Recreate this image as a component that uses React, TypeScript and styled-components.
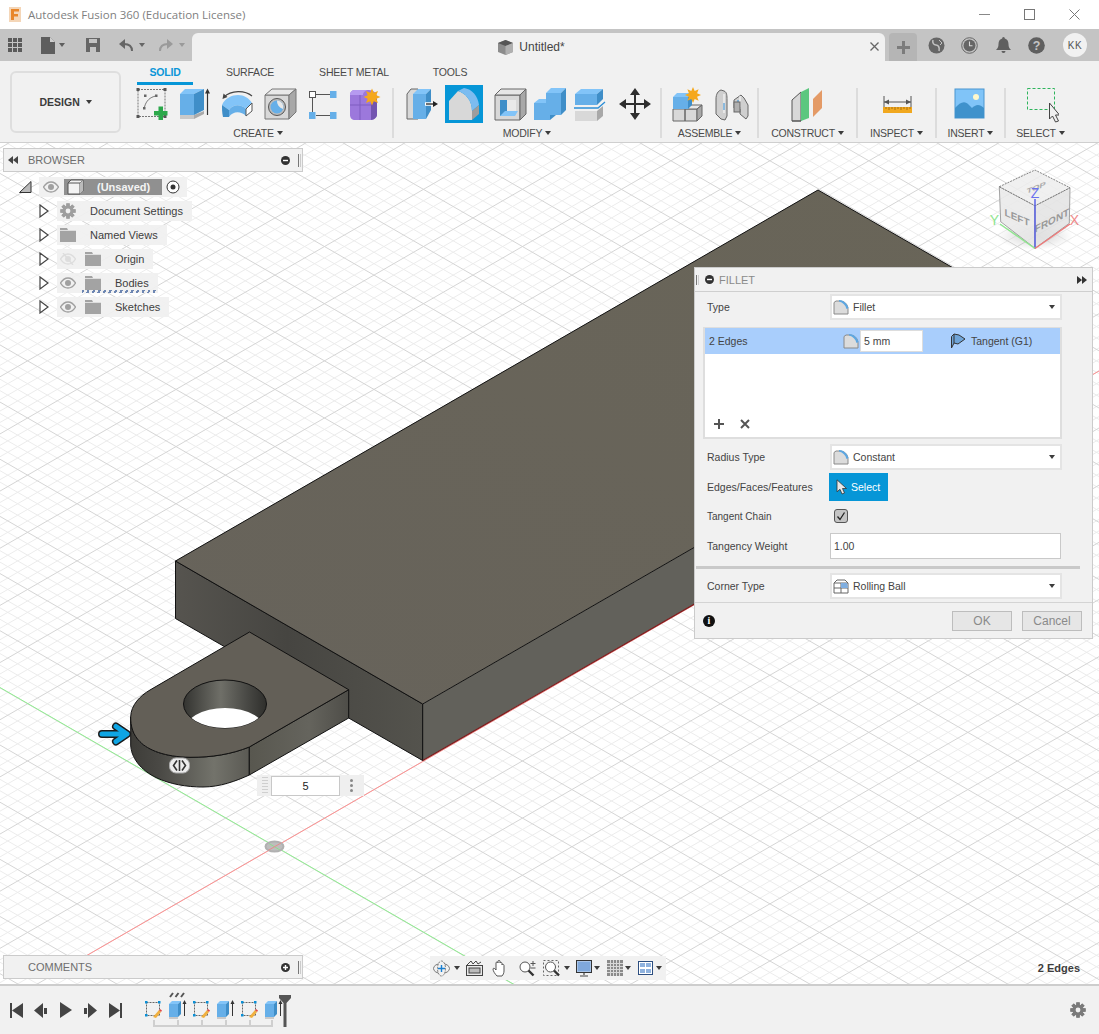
import React from "react";
import styled, { createGlobalStyle } from "styled-components";

const Global = createGlobalStyle`
  html, body { margin: 0; padding: 0; background: #fff; }
  * { box-sizing: border-box; }
`;

const Page = styled.div`
  width: 1099px; height: 1034px; overflow: hidden; display: flex; flex-direction: column;
  font-family: "Liberation Sans", Arial, sans-serif; font-size: 11px; color: #4a4a4a; background: #fff;
`;

/* ---------- title bar ---------- */
const TitleBar = styled.div`height: 29px; display: flex; align-items: center; padding-left: 9px; background: #fff; flex: none;`;
const TitleText = styled.span`margin-left: 7px; font-family: "Open Sans", sans-serif; font-size: 11.5px; color: #7f7f7f; white-space: nowrap;`;
const WindowControls = styled.div`margin-left: auto; margin-right: 2px; display: flex;`;
const WindowButton = styled.div`width: 45px; height: 29px; display: flex; align-items: center; justify-content: center;`;

/* ---------- document strip ---------- */
const TabStrip = styled.div`height: 32px; background: #c4c4c4; display: flex; flex: none;`;
const QuickTools = styled.div`width: 192px; display: flex; align-items: center; flex: none;`;
const QuickButton = styled.div<{ $ml: number }>`margin-left: ${(p) => p.$ml}px; display: flex; align-items: center;`;
const DocTab = styled.div`
  width: 693px; height: 28px; margin-top: 4px; padding-right: 14px; background: #f1f1f1; border-radius: 6px 6px 0 0;
  display: flex; align-items: center; justify-content: center; position: relative; font-size: 12px; color: #444;
`;
const DocTitle = styled.span`margin-left: 6px; margin-top: -1px;`;
const DocClose = styled.span`position: absolute; right: 6px; top: 9px; display: flex;`;
const PlusTab = styled.div`
  width: 28px; height: 28px; margin: 4px 0 0 4px; background: #b5b5b5; border-radius: 4px 4px 0 0;
  display: flex; align-items: center; justify-content: center;
`;
const StripIcon = styled.div<{ $ml: number }>`margin-left: ${(p) => p.$ml}px; display: flex; align-items: center; height: 32px;`;
const Avatar = styled.div`
  width: 24px; height: 24px; border-radius: 50%; background: #f1f1f1; margin: 4px 0 0 18px; color: #555;
  font-size: 10px; letter-spacing: 0.6px; display: flex; align-items: center; justify-content: center;
`;

/* ---------- toolbar ---------- */
const Toolbar = styled.div`height: 82px; background: #f1f1f1; border-bottom: 1px solid #cfcfcf; display: flex; flex: none;`;
const DesignButton = styled.div`
  width: 111px; height: 62px; margin: 10px 0 0 10px; border: 2px solid #dedede; border-radius: 6px;
  display: flex; align-items: center; justify-content: center; font-weight: bold; font-size: 10.5px; color: #3c3c3c; flex: none;
`;
const ToolColumn = styled.div`margin-left: 9px; display: flex; flex-direction: column;`;
const TabRow = styled.div`height: 24px; display: flex; gap: 19px; padding-left: 7px;`;
const RibbonTab = styled.div<{ $w: number; $active?: boolean }>`
  width: ${(p) => p.$w}px; height: 24px; padding-top: 4px; line-height: 14px; text-align: center; white-space: nowrap;
  color: ${(p) => (p.$active ? "#0b96d8" : "#4a4a4a")}; font-weight: ${(p) => (p.$active ? "bold" : "normal")}; font-size: 10.5px; letter-spacing: -0.2px;
  border-bottom: 3px solid ${(p) => (p.$active ? "#0696d7" : "transparent")};
`;
const GroupRow = styled.div`display: flex;`;
const Group = styled.div<{ $w: number }>`width: ${(p) => p.$w}px; display: flex; flex-direction: column; flex: none;`;
const SlotRow = styled.div`display: flex; height: 38px;`;
const Slot = styled.div<{ $ml: number; $selected?: boolean }>`
  width: 38px; height: 38px; margin-left: ${(p) => p.$ml}px; flex: none; background: ${(p) => (p.$selected ? "#0696d7" : "transparent")};
`;
const GroupLabel = styled.div<{ $shift?: number }>`
  margin-top: 3px; height: 14px; line-height: 14px; display: flex; justify-content: center; align-items: center; gap: 3px;
  font-size: 10.5px; letter-spacing: -0.25px; color: #4a4a4a; padding-right: ${(p) => p.$shift ?? 0}px;
`;
const Caret = styled.i<{ $size?: number; $color?: string }>`
  display: inline-block; width: 0; height: 0; flex: none;
  border-left: ${(p) => p.$size ?? 3}px solid transparent; border-right: ${(p) => p.$size ?? 3}px solid transparent;
  border-top: ${(p) => (p.$size ?? 3) + 1}px solid ${(p) => p.$color ?? "#3c3c3c"};
`;
const Separator = styled.div`width: 2px; height: 50px; margin-top: 3px; background: #dcdcdc; flex: none;`;
const IconSvg = styled.svg`display: block;`;

/* ---------- canvas ---------- */
const Canvas = styled.div`flex: 1; position: relative; overflow: hidden; background: #fff;`;
const Scene = styled.svg`position: absolute; left: 0; top: 0; display: block;`;

const Bar = styled.div`
  height: 24px; background: #f1f1f1; border: 1px solid #cbcbcb; display: flex; align-items: center; color: #6e6e6e; font-size: 11px;
`;
const BrowserPanel = styled.div`position: absolute; left: 3px; top: 5px; width: 300px;`;
const CommentsPanel = styled(Bar)`position: absolute; left: 3px; top: 812px; width: 300px; padding-left: 24px;`;
const BarTitle = styled.span``;
const BarEnd = styled.span`margin-left: auto; display: flex; align-items: center; gap: 8px; padding-right: 1px;`;
const Dot = styled.span`
  width: 9px; height: 9px; border-radius: 50%; background: #333; color: #fff; display: flex; align-items: center; justify-content: center; flex: none;
`;
const Grip = styled.span`width: 3px; height: 13px; border-left: 1px solid #777; border-right: 1px solid #ccc;`;

const TreeRow = styled.div<{ $indent: number; $first?: boolean }>`
  height: 24px; display: flex; align-items: center; padding-left: ${(p) => p.$indent}px; margin-top: ${(p) => (p.$first ? 3 : 0)}px;
`;
const Toggle = styled.span<{ $gap: number }>`margin-right: ${(p) => p.$gap}px; display: flex; flex: none;`;
const Chip = styled.div`
  height: 20px; background: rgba(240, 240, 240, 0.92); display: flex; align-items: center; padding: 0 9px 0 3px; position: relative;
  font-size: 11px; color: #3e3e3e; white-space: nowrap;
`;
const RootChip = styled(Chip)`padding: 0 7px 0 4px;`;
const RootLabel = styled.div`
  width: 98px; height: 16px; margin-left: 5px; background: #909090; display: flex; align-items: center; padding-left: 3px;
  color: #f4f4f4; font-weight: bold; font-size: 11px; margin-right: 4px;
`;
const RootText = styled.span`margin-left: 13px;`;
const ChipIcon = styled.span<{ $ml?: number }>`display: flex; flex: none; margin-left: ${(p) => p.$ml ?? 0}px;`;
const ChipText = styled.span`margin-left: 14px;`;
const Squiggle = styled.span`
  position: absolute; left: 25px; right: 2px; bottom: 0; height: 3px;
  background: repeating-linear-gradient(115deg, #6d86b2 0 2px, transparent 2px 5px);
`;

/* ---------- fillet dialog ---------- */
const Dialog = styled.div`
  position: absolute; left: 694px; top: 124px; width: 399px; height: 372px; background: #f1f1f1; border: 1px solid #cbcbcb; display: flex; flex-direction: column;
`;
const DialogHeader = styled.div`height: 24px; border-bottom: 1px solid #cfcfcf; display: flex; align-items: center; padding-left: 1px; color: #8a8a8a; flex: none;`;
const DialogTitle = styled.span`margin-left: 5px; font-size: 11px;`;
const HeaderGrip = styled(Grip)`margin-right: 6px; height: 10px;`;
const DialogFast = styled.span`margin-left: auto; margin-right: 5px; display: flex;`;
const FormRow = styled.div<{ $mt: number }>`height: 28px; margin-top: ${(p) => p.$mt}px; display: flex; align-items: center; padding-left: 12px; flex: none;`;
const FormLabel = styled.span<{ $small?: boolean }>`width: 123px; flex: none; font-size: ${(p) => (p.$small ? 10 : 10.5)}px; color: #444; white-space: nowrap;`;
const Select = styled.div`
  width: 232px; height: 26px; background: #fff; border: 2px solid #e4e4e4; display: flex; align-items: center; padding: 0 5px 0 1px; font-size: 10.5px; color: #444;
`;
const SelectText = styled.span`margin-left: 4px;`;
const SelectCaret = styled.span`margin-left: auto; display: flex;`;
const EdgeTable = styled.div`width: 359px; height: 112px; margin: 6px 0 0 8px; border: solid #dedede; border-width: 1px 2px 2px; background: #fff; display: flex; flex-direction: column; flex: none;`;
const EdgeRow = styled.div`height: 26px; background: #a9cefc; display: flex; align-items: center; color: #444; font-size: 10.5px; padding-left: 4px; flex: none;`;
const EdgeName = styled.span`width: 134px;`;
const EdgeInput = styled.div`width: 63px; height: 22px; margin-left: 1px; background: #fff; border: 1px solid #ddd; display: flex; align-items: center; padding-left: 3px;`;
const EdgeTangent = styled.span`margin-left: 27px; display: flex;`;
const EdgeTangentText = styled.span`margin-left: 5px;`;
const EdgeActions = styled.div`margin-top: auto; height: 28px; padding: 2px 0 0 8px; display: flex; gap: 14px; align-items: center;`;
const SelectButton = styled.div`
  width: 59px; height: 28px; margin-left: -1px; background: #0696d7; color: #fff; display: flex; align-items: center; padding-left: 7px; gap: 4px; font-size: 10.5px;
`;
const Check = styled.div`
  width: 14px; height: 14px; margin-left: 4px; background: #c4c4c4; border: 1px solid #555; border-radius: 3px; display: flex; align-items: center; justify-content: center;
`;
const TextField = styled.div`width: 231px; height: 26px; background: #fff; border: 1px solid #c9c9c9; display: flex; align-items: center; padding-left: 3px; font-size: 10.5px; color: #444;`;
const DialogRule = styled.div`height: 3px; width: 384px; margin: 6px 0 0 1px; background: #c9c9c9; flex: none;`;
const DialogFooter = styled.div`margin-top: 2px; flex: 1; border-top: 1px solid #d4d4d4; display: flex; align-items: center; padding: 0 10px 0 8px; gap: 10px;`;
const FooterDot = styled(Dot)`width: 12px; height: 12px; margin-right: auto; background: #111; font-family: "Liberation Serif", serif; font-weight: bold; font-size: 10px;`;
const FooterButton = styled.div`
  width: 60px; height: 20px; background: #e6e6e6; border: 1px solid #bdbdbd; color: #8a8a8a; font-size: 12px; display: flex; align-items: center; justify-content: center;
`;

/* ---------- on-canvas input ---------- */
const ValueBox = styled.div`
  position: absolute; left: 257px; top: 632px; width: 107px; height: 21px; background: #efefef; display: flex; align-items: center;
`;
const ValueGrip = styled.span`width: 6px; height: 17px; margin: 0 3px 0 5px; background: repeating-linear-gradient(180deg, #cfcfcf 0 1px, transparent 1px 3px);`;
const ValueField = styled.div`width: 69px; height: 20px; background: #fff; border: 1px solid #c8c8c8; display: flex; align-items: center; justify-content: center; color: #222; font-size: 11px;`;
const ValueDots = styled.span`margin-left: 10px; display: flex; flex-direction: column; gap: 2px;`;
const ValueDot = styled.i`width: 3px; height: 3px; border-radius: 50%; background: #888;`;

/* ---------- nav bar ---------- */
const NavBar = styled.div`position: absolute; left: 430px; top: 813px; width: 236px; height: 24px; background: #f1f1f1; display: flex; align-items: center;`;
const NavItem = styled.span<{ $ml: number }>`margin-left: ${(p) => p.$ml}px; display: flex; align-items: center; flex: none;`;
const SelectionCount = styled.span`position: absolute; right: 19px; top: 819px; font-weight: bold; font-size: 11px; color: #3d3d3d;`;

/* ---------- timeline ---------- */
const Timeline = styled.div`height: 50px; flex: none; background: #f1f1f1; border-top: 2px solid #cdcdcd; display: flex; align-items: center; padding-left: 10px;`;
const PlayButton = styled.span<{ $ml: number }>`margin-left: ${(p) => p.$ml}px; display: flex;`;
const Track = styled.div`margin-left: 19px; display: flex;`;
const Gear = styled.span`margin-left: auto; margin-right: 13px; display: flex;`;

/* ---------- drawings ---------- */
const B = { l: "#82c4f8", m: "#66afe8", d: "#3f8ec8", g: "#d8d8d8", gd: "#a8a8a8", o: "#666" };

const Sun: React.FC<{ cx: number; cy: number; r: number }> = ({ cx, cy, r }) => {
  const pts: string[] = [];
  for (let i = 0; i < 16; i++) {
    const a = (i * Math.PI) / 8;
    const R = i % 2 ? r * 0.55 : r;
    pts.push(`${cx + R * Math.sin(a)},${cy - R * Math.cos(a)}`);
  }
  return <polygon points={pts.join(" ")} fill="#f5a81c" />;
};

const Ico: React.FC<{ children: React.ReactNode }> = ({ children }) => (
  <IconSvg width="38" height="38" viewBox="0 0 38 38">{children}</IconSvg>
);

const SketchIcon = () => (
  <Ico>
    <rect x="6" y="4.5" width="27" height="27" fill="none" stroke="#777" strokeDasharray="2 1" />
    {[[4.5, 3], [31.5, 3], [4.5, 30], [31.5, 30]].map(([x, y]) => <rect key={`${x}${y}`} x={x} y={y} width="3" height="3" fill="#555" />)}
    <rect x="12" y="9.5" width="2.5" height="2.5" fill="#666" /><rect x="23" y="9.5" width="2.5" height="2.5" fill="#666" />
    <rect x="11" y="22" width="2.5" height="2.5" fill="#666" />
    <path d="M12.5 22 C14 16 18 12 24 11" fill="none" stroke="#777" />
    <path d="M26.5 21.5h4.500v4.500h4.500v4.500h-4.500v4.500h-4.500v-4.500h-4.500v-4.500h4.500z" fill="#2ba84a" />
  </Ico>
);
const ExtrudeIcon = () => (
  <Ico>
    <path d="M1 30h14v4H1z" fill="#c9c9c9" /><path d="M15 34l10-5v-3l-10 4z" fill="#aaa" />
    <path d="M1 9h14v21H1z" fill={B.m} /><path d="M1 9l5-5h19l-10 5z" fill={B.l} /><path d="M15 9l10-5v21l-10 5z" fill={B.d} />
    <path d="M28.5 30V6" stroke="#333" strokeWidth="1.2" /><path d="M28.5 3.5l-2.5 5h5z" fill="#333" />
  </Ico>
);
const RevolveIcon = () => (
  <Ico>
    <path d="M5 12C12 5 26 5 33 11" fill="none" stroke="#444" strokeWidth="1.1" /><path d="M3.500 14l1-5.500 4 3.500z" fill="#444" />
    <path d="M3 20C6 13 13 10 19 10C25 10 30 13 33 18L27 24C22 19 14 19 10 25Z" fill={B.l} />
    <path d="M3 20L10 25V32H4C3 28 3 24 3 20Z" fill={B.d} />
    <path d="M10 25C14 19 22 19 27 24V31C22 26 14 26 10 32Z" fill={B.m} />
    <path d="M27 24L33 18V26L27 31Z" fill="#fff" stroke="#555" />
  </Ico>
);
const HoleIcon = () => (
  <Ico>
    <path d="M4 10h24v24H4z" fill={B.g} stroke="#777" /><path d="M4 10l7-6h24l-7 6z" fill="#e8e8e8" stroke="#777" />
    <path d="M28 10l7-6v23l-7 7z" fill={B.gd} stroke="#777" />
    <circle cx="16" cy="22" r="8.5" fill="#bbb" stroke="#555" /><circle cx="16" cy="22" r="6.5" fill={B.m} />
    <path d="M16 15.5a6.5 6.5 0 0 1 6 8.5 8 8 0 0 1-6-8.5z" fill="#e8e8e8" />
  </Ico>
);
const PatternIcon = () => (
  <Ico>
    <rect x="6.5" y="6.5" width="6" height="6" fill="#fff" stroke="#555" />
    <rect x="27" y="6" width="6.5" height="7" fill={B.m} /><rect x="6" y="27" width="6.5" height="7" fill={B.m} /><rect x="27" y="27" width="6.5" height="7" fill={B.m} />
    <path d="M13 9.500h14M13 30.500h14M9.500 13v14" stroke="#555" />
  </Ico>
);
const FormIcon = () => (
  <Ico>
    <path d="M2 10c0-3 2-5 5-5h14c4 0 8 3 8 7v17c0 3-3 6-6 6H7c-3 0-5-2-5-5z" fill="#9c78dc" />
    <path d="M2 10c0-3 2-5 5-5h14c-3 0-6 2-6 5z" fill="#b69af0" />
    <path d="M23 14h6v16c0 2-3 5-6 5z" fill="#7355b0" />
    <path d="M2 20h21M12 10v25" stroke="#7e5cc0" />
    <Sun cx={24} cy={12} r={8.5} />
  </Ico>
);
const PressPullIcon = () => (
  <Ico>
    <path d="M1 9l4-5h7v30H1z" fill={B.g} stroke="#666" />
    <path d="M7 9l5-5h13l-5 5z" fill={B.l} /><path d="M7 9h13v25H7z" fill={B.m} /><path d="M20 9l5-5v21l-5 9z" fill={B.d} />
    <path d="M19 19h9" stroke="#fff" strokeWidth="3.5" /><path d="M20 19h8" stroke="#222" strokeWidth="1.3" /><path d="M32 19l-5-3v6z" fill="#222" />
  </Ico>
);
const FilletIcon = () => (
  <Ico>
    <path d="M4 16L13 6C20 8 27 15 27 26V35H4Z" fill={B.g} />
    <path d="M13 6L19 3C27 4 33 11 34 20L27 26C27 15 20 8 13 6Z" fill="#7cbcf0" />
    <path d="M27 26L34 20V29L27 35Z" fill="#9d9d9d" />
  </Ico>
);
const ShellIcon = () => (
  <Ico>
    <path d="M2 10h25v25H2z" fill={B.g} stroke="#666" /><path d="M2 10l6-6h25l-6 6z" fill="#e6e6e6" stroke="#666" />
    <path d="M27 10l6-6v25l-6 6z" fill={B.gd} stroke="#666" />
    <path d="M7 15h7v11h8v5H7z" fill={B.d} /><path d="M14 15h9v11h-9z" fill="#e9e9e9" /><path d="M12 26h13l-3 5H7z" fill={B.l} />
  </Ico>
);
const CombineIcon = () => (
  <Ico>
    <path d="M3 18h16v17H3z" fill={B.m} /><path d="M3 18l5-4h10v4z" fill={B.l} />
    <path d="M15 8h15v22H15z" fill={B.m} /><path d="M15 8l5-5h15l-5 5z" fill={B.l} /><path d="M30 8l5-5v22l-5 5z" fill={B.d} />
    <path d="M19 30h6l-6 5z" fill={B.d} />
  </Ico>
);
const OffsetIcon = () => (
  <Ico>
    <path d="M2 9l6-5h22l-6 5z" fill={B.l} /><path d="M2 9h22v11H2z" fill={B.m} /><path d="M24 9l6-5v10l-6 6z" fill={B.d} />
    <path d="M1 23h24l7-6" fill="none" stroke="#2c8ed6" strokeWidth="1.3" />
    <path d="M2 26h22v10H2z" fill={B.g} /><path d="M24 26l6-5v10l-6 5z" fill={B.gd} />
  </Ico>
);
const MoveIcon = () => (
  <Ico>
    <path d="M19 5v28M5 19h28" stroke="#2e2e2e" strokeWidth="2" />
    <path d="M19 3l-5 7h10zM19 35l-5-7h10zM3 19l7-5v10zM35 19l-7-5v10z" fill="#2e2e2e" />
  </Ico>
);
const NewComponentIcon = () => (
  <Ico>
    <path d="M5 24h12v12H5zM17 24h12v12H17z" fill={B.g} stroke="#666" /><path d="M17 24l5-4h12l-5 4z" fill="#e8e8e8" stroke="#666" /><path d="M29 24l5-4v11l-5 5z" fill={B.gd} stroke="#666" />
    <path d="M5 12l4-4h15l-4 4z" fill={B.l} /><path d="M5 12h15v12H5z" fill={B.m} /><path d="M20 12l4-4v12l-4 4z" fill={B.d} />
    <Sun cx={25} cy={10} r={8} />
  </Ico>
);
const JointIcon = () => (
  <Ico>
    <path d="M3 14c0-5 2-8 5-9l3 1c3 1 3 5 3 9v16l-2 4-4-1-5-5z" fill="#cfcfcf" stroke="#666" />
    <path d="M21 15l7-5 3 3 4 7v11l-2 3-6-5v-7l-6 1z" fill="#cfcfcf" stroke="#666" />
    <path d="M11 9v19M27 11v13" stroke="#fff" /><path d="M11 18v7M25 15v6" stroke="#2f8dd6" /><rect x="21" y="17" width="6" height="10" fill="#b0b0b0" stroke="#666" />
  </Ico>
);
const PlaneIcon = () => (
  <Ico>
    <path d="M4 15l9-8v29H4z" fill={B.g} stroke="#555" /><path d="M13 7v29l8-3V3z" fill="#5cc77f" />
    <path d="M4 36h9" stroke="#555" /><path d="M25 32V14l9-9v18z" fill="#e49a66" />
  </Ico>
);
const RulerIcon = () => (
  <Ico>
    <path d="M6 11v13M33 11v13M6 17h27" stroke="#555" /><path d="M6 17l5-2.500v5zM33 17l-5-2.500v5z" fill="#555" />
    <rect x="5" y="22" width="29" height="6" fill="#f1a81f" />
    <path d="M8 22v2M11 22v3M14 22v2M17 22v3M20 22v2M23 22v3M26 22v2M29 22v3M32 22v2" stroke="#8b5a0a" strokeWidth=".7" />
  </Ico>
);
const ImageIcon = () => (
  <Ico>
    <rect x="4" y="4" width="29" height="29" fill="#80c4f8" stroke="#4a96d0" />
    <circle cx="25" cy="12" r="3" fill="#fff8cc" />
    <path d="M4 33V23c5-6 10-8 14-3l3 3c3-3 7-5 12 0v10z" fill="#3f92cc" />
  </Ico>
);
const SelectIcon = () => (
  <Ico>
    <rect x="6.500" y="3.500" width="27" height="21" fill="none" stroke="#2eb45c" strokeDasharray="3 2" />
    <path d="M28.500 18v16l3-3 3 6 3-1-3-6h4z" fill="#f1f1f1" stroke="#444" />
  </Ico>
);

const GearGlyph: React.FC<{ size: number; color: string }> = ({ size, color }) => {
  const teeth = Array.from({ length: 8 }, (_, i) => i * 45);
  return (
    <IconSvg width={size} height={size} viewBox="0 0 16 16">
      {teeth.map((t) => <rect key={t} x="6.3" y="0.4" width="3.4" height="15.2" fill={color} transform={`rotate(${t} 8 8)`} />)}
      <circle cx="8" cy="8" r="5.6" fill={color} /><circle cx="8" cy="8" r="2.4" fill="#f1f1f1" />
    </IconSvg>
  );
};
const FolderGlyph = () => (
  <IconSvg width="16" height="14" viewBox="0 0 16 14">
    <path d="M0 0h7l1 2h8v12H0z" fill="#a3a3a3" /><path d="M0 2.500h16" stroke="#eee" strokeWidth=".8" />
  </IconSvg>
);
const EyeGlyph: React.FC<{ off?: boolean; w?: number }> = ({ off, w = 16 }) => (
  <IconSvg width={w} height="12" viewBox="0 0 16 12">
    <path d="M.5 6C3 2 5.500 1 8 1s5 1 7.500 5C13 10 10.500 11 8 11S3 10 .5 6z" fill="none" stroke={off ? "#ddd" : "#a0a0a0"} strokeWidth="1.400" />
    <circle cx="8" cy="6" r="3" fill={off ? "#ddd" : "#a0a0a0"} />
    {off && <path d="M3 0l10 12" stroke="#ddd" strokeWidth="1.400" />}
  </IconSvg>
);
const TreeArrow = () => (
  <IconSvg width="10" height="14" viewBox="0 0 10 14"><path d="M1 1l8 6-8 6z" fill="#fff" stroke="#444" strokeWidth="1.200" /></IconSvg>
);
const FilletGlyph = () => (
  <IconSvg width="16" height="16" viewBox="0 0 16 16">
    <path d="M1 3.500 3 2h4c4 0 8 3 8 8v5H1z" fill="#dcdcdc" stroke="#8a8a8a" />
    <path d="M6 1c4 0 8 3 9.500 8l-2 1C12.500 6 10 3.500 6 2.500z" fill="#5da7e2" />
  </IconSvg>
);
const TangentGlyph = () => (
  <IconSvg width="16" height="16" viewBox="0 0 16 16">
    <path d="M1.500 15V3.500L4 1l5 1 6 4-7 5-4-1-2.500 5z" fill="#6fa4d8" stroke="#333" />
    <path d="M4 1v9" stroke="#333" />
  </IconSvg>
);
const CornerGlyph = () => (
  <IconSvg width="16" height="16" viewBox="0 0 16 16">
    <path d="M1 5h14v10H1zM1 5l3-3h8l3 3M8 5v10M1 10h14" fill="none" stroke="#666" /><path d="M8 5h6l1 5H8z" fill="#7faee0" />
  </IconSvg>
);
const Cursor: React.FC<{ color: string; stroke: string }> = ({ color, stroke }) => (
  <IconSvg width="11" height="16" viewBox="0 0 11 16"><path d="M1 .8v12l3-2.500 2 4.700 2.500-1-2-4.500h4z" fill={color} stroke={stroke} strokeWidth=".8" /></IconSvg>
);

const TimelineSketch = () => (
  <IconSvg width="24" height="26" viewBox="0 0 24 26">
    <rect x="2.500" y="4.500" width="13" height="13" fill="none" stroke="#666" strokeDasharray="2 1" />
    {[[1, 3], [14, 3], [1, 16]].map(([x, y]) => <rect key={`${x}${y}`} x={x} y={y} width="2.500" height="2.500" fill="#0a8fd6" />)}
    <path d="M9 19l3 1 5-6-2-2z" fill="#f0b040" /><path d="M15 12l2 2 1-1.500-2-1.500z" fill="#e04848" />
  </IconSvg>
);
const TimelineExtrude = () => (
  <IconSvg width="24" height="26" viewBox="0 0 24 26">
    <path d="M1 18h9v3H1z" fill="#c9c9c9" /><path d="M1 6h9v13H1z" fill={B.m} /><path d="M1 6l3-3h9l-3 3z" fill={B.l} /><path d="M10 6l3-3v13l-3 3z" fill={B.d} />
    <path d="M16.500 18V5" stroke="#333" /><path d="M16.500 2l-2 4h4z" fill="#333" />
  </IconSvg>
);
const TrackRow = styled.div`display: flex; width: 150px; height: 46px; position: relative; padding-left: 3px;`;
const TrackItem = styled.span`margin-top: 11px; flex: none; width: 24px;`;
const TrackBracket = styled.div`
  position: absolute; left: 12px; top: 33px; width: 120px; height: 7px; border: 2px solid #cfcfcf; border-top: 0;
  background: repeating-linear-gradient(90deg, transparent 0 22px, #cfcfcf 22px 24px);
`;
const TrackMarker = styled.svg`position: absolute; left: 138px; top: 8px; display: block;`;
const FeatureTicks = styled.svg`position: absolute; left: 28px; top: 5px; display: block;`;

/* ---------- 3-D scene ---------- */
const gridPath = (step: number, skip: boolean) => {
  const x0 = 275, y0 = 846.7, m = 0.5775, dy = 57.16;
  let d = "";
  const n = 240;
  for (const s of [1, -1]) {
    for (let i = -n; i <= n; i++) {
      if (skip && i % step === 0) continue;
      if (!skip && i % step !== 0) continue;
      const base = y0 + (i * dy) / 5 + (s === 1 ? -m * x0 : m * x0);
      d += `M0 ${base.toFixed(2)}L1099 ${(base + s * m * 1099).toFixed(2)}`;
    }
  }
  return d;
};

const Model = () => (
  <Scene width="1099" height="842" viewBox="0 143 1099 842">
    <defs>
      <linearGradient id="lf" x1="0" x2="1" y1="0" y2="0">
        <stop offset="0" stopColor="#56544f" /><stop offset=".45" stopColor="#464541" /><stop offset="1" stopColor="#54534d" />
      </linearGradient>
      <linearGradient id="top" x1="0" x2="1" y1="1" y2="0">
        <stop offset="0" stopColor="#67635b" /><stop offset="1" stopColor="#696558" />
      </linearGradient>
      <linearGradient id="curve" gradientUnits="userSpaceOnUse" x1="130" x2="250" y1="0" y2="0">
        <stop offset="0" stopColor="#3d3c38" /><stop offset=".25" stopColor="#4a4945" /><stop offset=".7" stopColor="#73736b" /><stop offset="1" stopColor="#5a5953" />
      </linearGradient>
      <linearGradient id="straight" gradientUnits="userSpaceOnUse" x1="249" x2="349" y1="0" y2="0">
        <stop offset="0" stopColor="#58574f" /><stop offset=".6" stopColor="#65645d" /><stop offset="1" stopColor="#4e4d48" />
      </linearGradient>
      <linearGradient id="hole" gradientUnits="userSpaceOnUse" x1="183" x2="267" y1="0" y2="0">
        <stop offset="0" stopColor="#333330" /><stop offset=".45" stopColor="#6f6f68" /><stop offset=".75" stopColor="#4a4a46" /><stop offset="1" stopColor="#2e2e2b" />
      </linearGradient>
      <clipPath id="holeClip"><ellipse cx="225" cy="704" rx="41.500" ry="24" /></clipPath>
      <radialGradient id="cubeShadow"><stop offset="0" stopColor="#999" stopOpacity=".45" /><stop offset="1" stopColor="#999" stopOpacity="0" /></radialGradient>
    </defs>

    <path d={gridPath(5, true)} stroke="#ececec" strokeWidth="1" fill="none" />
    <path d={gridPath(5, false)} stroke="#d5d5d5" strokeWidth="1" fill="none" />

    <path d="M0 687.500L515 985" stroke="#90ee90" strokeWidth="1" />
    <path d="M60 971L1099 371" stroke="#ff9090" strokeWidth="1" />

    <path d="M175.500 561L422.700 704V760.500L175.500 618.500Z" fill="url(#lf)" stroke="#111" />
    <path d="M422.700 704L1066 333V390L422.700 760.500Z" fill="#62615b" />
    <path d="M175.500 561L818 190L1066 333L422.700 704Z" fill="url(#top)" />
    <path d="M175.500 561L818 190L1066 333M175.500 561L422.700 704L1066 333M422.700 704V760.500" fill="none" stroke="#111" />
    <path d="M422.700 760.500L1066 390" fill="none" stroke="#7d1c1c" strokeWidth="1.200" />

    <path d="M130.700 716.700V745C131 757 140 770 157 778C170 784 186 787 203 787C220 787 236 781 249.300 775V747C232 754 212 757.500 190 757.300C165 757 148 750 140 741.700C133 735 130.500 726 130.700 716.700Z" fill="url(#curve)" stroke="#111" />
    <path d="M249.300 747L348.700 689.700V718L249.300 775Z" fill="url(#straight)" stroke="#111" />
    <path d="M249.500 632L348.700 689.700L249.300 747C232 754 212 757.500 190 757.300C165 757 148 750 140 741.700C133 735 130.500 726 130.700 716.700C131 705 140 696 150 690Z" fill="#635f57" stroke="#111" />
    <ellipse cx="225" cy="704" rx="41.500" ry="24" fill="url(#hole)" stroke="#111" />
    <g clipPath="url(#holeClip)"><ellipse cx="225" cy="732" rx="41.500" ry="24" fill="#fff" /></g>

    {/* drag arrow */}
    <path d="M102 734H126M116 726.500L127 734L116 741.500" fill="none" stroke="#1c1c1c" strokeWidth="8" strokeLinecap="round" strokeLinejoin="round" />
    <path d="M102 734H126M116 726.500L127 734L116 741.500" fill="none" stroke="#0ea5e4" strokeWidth="5" strokeLinecap="round" strokeLinejoin="round" />
    {/* edge handle */}
    <rect x="169.500" y="758" width="20" height="15" rx="6.500" fill="#ececec" stroke="#aaa" />
    <path d="M177 760.500l-3.500 5 3.500 5M182 760.500l3.500 5-3.500 5M179.500 760v11" fill="none" stroke="#333" strokeWidth="1.600" />
    {/* origin */}
    <ellipse cx="274.500" cy="846.500" rx="9" ry="5" fill="#bdbdbd" stroke="#b0b0b0" strokeWidth="2" />
    <path d="M269 843.500l11 6.500" stroke="#8fdc8f" /><path d="M268 850.500l13-7.500" stroke="#e68c8c" />

    {/* view cube */}
    <ellipse cx="1035" cy="236" rx="38" ry="14" fill="url(#cubeShadow)" />
    <path d="M999.300 186.700L1035 205.700L1035 248.300L1000.700 221.700Z" fill="#e9e9e9" fillOpacity=".85" stroke="#8d8d8d" strokeWidth=".8" />
    <path d="M1035 205.700L1070 187.700L1069.300 223.300L1035 248.300Z" fill="#e3e3e3" fillOpacity=".85" stroke="#8d8d8d" strokeWidth=".8" />
    <path d="M999.300 186.700L1035 170L1070 187.700L1035 205.700Z" fill="#ededed" fillOpacity=".85" stroke="#666" strokeWidth=".8" strokeDasharray="2 1" />
    <text transform="translate(1017 221) skewY(24)" textAnchor="middle" fontFamily="Liberation Sans" fontSize="10" fill="#999" fontWeight="bold">LEFT</text>
    <text transform="translate(1052 224) skewY(-27)" textAnchor="middle" fontFamily="Liberation Sans" fontSize="10" fill="#999" fontWeight="bold">FRONT</text>
    <text transform="translate(1036 190) skewX(-32) rotate(-28) " textAnchor="middle" fontFamily="Liberation Sans" fontSize="8" fill="#aaa" fontWeight="bold">TOP</text>
    <path d="M1035 248.500V199" stroke="#5a63e8" strokeWidth="1.500" />
    <path d="M1035 248.500L1000 224" stroke="#8fe68f" strokeWidth="1.500" />
    <path d="M1035 248.500L1070 224" stroke="#ee7a7a" strokeWidth="1.500" />
    <text x="1035" y="198" textAnchor="middle" fontFamily="Liberation Sans" fontSize="14" fill="#6a72ee">Z</text>
    <text x="994.500" y="225" textAnchor="middle" fontFamily="Liberation Sans" fontSize="14" fill="#8fe68f">Y</text>
    <text x="1074.500" y="225" textAnchor="middle" fontFamily="Liberation Sans" fontSize="14" fill="#f08a8a">X</text>
  </Scene>
);

const App: React.FC = () => (
  <Page>
    <Global />
    <TitleBar>
      <IconSvg width="12" height="15" viewBox="0 0 12 15">
        <rect width="12" height="15" fill="#f4d6b8" /><path d="M2 2h8v2.500H5v2.500h4v2.500H5V13H2z" fill="#e8862a" />
      </IconSvg>
      <TitleText>Autodesk Fusion 360 (Education License)</TitleText>
      <WindowControls>
        <WindowButton><IconSvg width="11" height="11" viewBox="0 0 11 11"><path d="M0 5.500h11" stroke="#888" /></IconSvg></WindowButton>
        <WindowButton><IconSvg width="11" height="11" viewBox="0 0 11 11"><rect x=".5" y=".5" width="10" height="10" fill="none" stroke="#777" /></IconSvg></WindowButton>
        <WindowButton><IconSvg width="11" height="11" viewBox="0 0 11 11"><path d="M.5.500l10 10M10.500.500l-10 10" stroke="#777" /></IconSvg></WindowButton>
      </WindowControls>
    </TitleBar>

    <TabStrip>
      <QuickTools>
        <QuickButton $ml={8}>
          <IconSvg width="14" height="14" viewBox="0 0 14 14" fill="#5a5a5a">
            {[0, 5, 10].flatMap((x) => [0, 5, 10].map((y) => <rect key={`${x}-${y}`} x={x} y={y} width="4" height="4" />))}
          </IconSvg>
        </QuickButton>
        <QuickButton $ml={19}>
          <IconSvg width="14" height="17" viewBox="0 0 14 17"><path d="M0 0h9l5 5v12H0z" fill="#5e5e5e" /><path d="M9 0v5h5" fill="#cfcfcf" /></IconSvg>
        </QuickButton>
        <QuickButton $ml={4}><Caret $color="#5e5e5e" /></QuickButton>
        <QuickButton $ml={21}>
          <IconSvg width="14" height="14" viewBox="0 0 14 14"><path d="M0 0h14v14H0z" fill="#666" /><rect x="3" y="1" width="8" height="4" fill="#c4c4c4" /><rect x="4" y="9" width="6" height="5" fill="#c4c4c4" /></IconSvg>
        </QuickButton>
        <QuickButton $ml={19}>
          <IconSvg width="14" height="14" viewBox="0 0 14 14"><path d="M13 13c0-5-3-7-8-7" fill="none" stroke="#666" strokeWidth="2" /><path d="M0 6l6-5v10z" fill="#666" /></IconSvg>
        </QuickButton>
        <QuickButton $ml={6}><Caret $color="#666" /></QuickButton>
        <QuickButton $ml={14}>
          <IconSvg width="14" height="14" viewBox="0 0 14 14"><path d="M1 13c0-5 3-7 8-7" fill="none" stroke="#9a9a9a" strokeWidth="2" /><path d="M14 6L8 1v10z" fill="#9a9a9a" /></IconSvg>
        </QuickButton>
        <QuickButton $ml={6}><Caret $color="#9a9a9a" /></QuickButton>
      </QuickTools>
      <DocTab>
        <IconSvg width="15" height="15" viewBox="0 0 15 15">
          <path d="M0 3l7.500-3L15 3v9l-7.500 3L0 12z" fill="#8c8c8c" /><path d="M0 3l7.500 3L15 3 7.500 0z" fill="#555" /><path d="M7.500 6v9L15 12V3z" fill="#b0b0b0" />
        </IconSvg>
        <DocTitle>Untitled*</DocTitle>
        <DocClose><IconSvg width="9" height="9" viewBox="0 0 9 9"><path d="M.5.500l8 8M8.500.500l-8 8" stroke="#666" strokeWidth="1.300" /></IconSvg></DocClose>
      </DocTab>
      <PlusTab>
        <IconSvg width="13" height="13" viewBox="0 0 13 13"><path d="M6.500 0v13M0 6.500h13" stroke="#7c7c7c" strokeWidth="3" /></IconSvg>
      </PlusTab>
      <StripIcon $ml={11}>
        <IconSvg width="17" height="17" viewBox="0 0 17 17"><circle cx="8.500" cy="8.500" r="8" fill="#666" /><path d="M5 3c-1 3 1 5 3 5s4 2 3 6" fill="none" stroke="#c4c4c4" strokeWidth="1.500" /><path d="M11 3l3 3-2 2" fill="none" stroke="#c4c4c4" /></IconSvg>
      </StripIcon>
      <StripIcon $ml={16}>
        <IconSvg width="17" height="17" viewBox="0 0 17 17"><circle cx="8.500" cy="8.500" r="7.800" fill="none" stroke="#666" /><circle cx="8.500" cy="8.500" r="6" fill="#666" /><path d="M8.500 4.500v4.300h3" fill="none" stroke="#d8d8d8" strokeWidth="1.100" /></IconSvg>
      </StripIcon>
      <StripIcon $ml={18}>
        <IconSvg width="15" height="17" viewBox="0 0 15 17"><path d="M7.500 0c1 0 1.300.800 1.300 1.500C11 2 12.500 4 12.500 7c0 3 .800 4.500 2.500 6H0c1.700-1.500 2.500-3 2.500-6 0-3 1.500-5 3.700-5.500C6.200.800 6.500 0 7.500 0zM5.500 14h4a2 2 0 0 1-4 0z" fill="#5f5f5f" /></IconSvg>
      </StripIcon>
      <StripIcon $ml={17}>
        <IconSvg width="17" height="17" viewBox="0 0 17 17"><circle cx="8.500" cy="8.500" r="8.300" fill="#5f5f5f" /><text x="8.500" y="13" textAnchor="middle" fontFamily="Liberation Sans" fontWeight="bold" fontSize="12.500" fill="#c4c4c4">?</text></IconSvg>
      </StripIcon>
      <Avatar>KK</Avatar>
    </TabStrip>

    <Toolbar>
      <DesignButton>DESIGN&nbsp;&nbsp;<Caret /></DesignButton>
      <ToolColumn>
        <TabRow>
          <RibbonTab $w={56} $active>SOLID</RibbonTab>
          <RibbonTab $w={76}>SURFACE</RibbonTab>
          <RibbonTab $w={94}>SHEET METAL</RibbonTab>
          <RibbonTab $w={60}>TOOLS</RibbonTab>
        </TabRow>
        <GroupRow>
          <Group $w={262}>
            <SlotRow>
              <Slot $ml={2}><SketchIcon /></Slot><Slot $ml={9}><ExtrudeIcon /></Slot><Slot $ml={2}><RevolveIcon /></Slot>
              <Slot $ml={4}><HoleIcon /></Slot><Slot $ml={4}><PatternIcon /></Slot><Slot $ml={7}><FormIcon /></Slot>
            </SlotRow>
            <GroupLabel $shift={6}>CREATE <Caret /></GroupLabel>
          </Group>
          <Separator />
          <Group $w={266}>
            <SlotRow>
              <Slot $ml={12}><PressPullIcon /></Slot><Slot $ml={1} $selected><FilletIcon /></Slot><Slot $ml={10}><ShellIcon /></Slot>
              <Slot $ml={0}><CombineIcon /></Slot><Slot $ml={4}><OffsetIcon /></Slot><Slot $ml={5}><MoveIcon /></Slot>
            </SlotRow>
            <GroupLabel>MODIFY <Caret /></GroupLabel>
          </Group>
          <Separator />
          <Group $w={95}>
            <SlotRow><Slot $ml={6}><NewComponentIcon /></Slot><Slot $ml={7}><JointIcon /></Slot></SlotRow>
            <GroupLabel>ASSEMBLE <Caret /></GroupLabel>
          </Group>
          <Separator />
          <Group $w={97}>
            <SlotRow><Slot $ml={29}><PlaneIcon /></Slot></SlotRow>
            <GroupLabel>CONSTRUCT <Caret /></GroupLabel>
          </Group>
          <Separator />
          <Group $w={77}>
            <SlotRow><Slot $ml={20}><RulerIcon /></Slot></SlotRow>
            <GroupLabel>INSPECT <Caret /></GroupLabel>
          </Group>
          <Separator />
          <Group $w={67}>
            <SlotRow><Slot $ml={14}><ImageIcon /></Slot></SlotRow>
            <GroupLabel>INSERT <Caret /></GroupLabel>
          </Group>
          <Separator />
          <Group $w={69}>
            <SlotRow><Slot $ml={15}><SelectIcon /></Slot></SlotRow>
            <GroupLabel>SELECT <Caret /></GroupLabel>
          </Group>
        </GroupRow>
      </ToolColumn>
    </Toolbar>

    <Canvas>
      <Model />

      <BrowserPanel>
        <Bar>
          <IconSvg width="24" height="8" viewBox="0 0 24 8"><path d="M4 4l5-4v8zM9 4l5-4v8z" fill="#444" /></IconSvg>
          <BarTitle>BROWSER</BarTitle>
          <BarEnd><Dot><IconSvg width="5" height="5" viewBox="0 0 5 5"><path d="M0 2.500h5" stroke="#fff" strokeWidth="1.400" /></IconSvg></Dot><Grip /></BarEnd>
        </Bar>
        <TreeRow $indent={16} $first>
          <Toggle $gap={7}><IconSvg width="13" height="12" viewBox="0 0 13 12"><path d="M.5 11.500L12 .5v11z" fill="#bbb" stroke="#333" /></IconSvg></Toggle>
          <RootChip>
            <ChipIcon><EyeGlyph w={16} /></ChipIcon>
            <RootLabel>
              <IconSvg width="17" height="16" viewBox="0 0 17 16"><path d="M1 4l3-3h12v11l-3 3H1z" fill="#f3f3f3" stroke="#555" /><path d="M13 4v11M1 4h12l3-3" fill="none" stroke="#555" /><path d="M13 4l3-3v11l-3 3z" fill="#bbb" /></IconSvg>
              <RootText>(Unsaved)</RootText>
            </RootLabel>
            <ChipIcon>
              <IconSvg width="14" height="14" viewBox="0 0 14 14"><circle cx="7" cy="7" r="6" fill="#fff" stroke="#333" /><circle cx="7" cy="7" r="2.500" fill="#333" /></IconSvg>
            </ChipIcon>
          </RootChip>
        </TreeRow>
        <TreeRow $indent={36}><Toggle $gap={8}><TreeArrow /></Toggle><Chip><ChipIcon><GearGlyph size={16} color="#9e9e9e" /></ChipIcon><ChipText>Document Settings</ChipText></Chip></TreeRow>
        <TreeRow $indent={36}><Toggle $gap={8}><TreeArrow /></Toggle><Chip><ChipIcon><FolderGlyph /></ChipIcon><ChipText>Named Views</ChipText></Chip></TreeRow>
        <TreeRow $indent={36}><Toggle $gap={8}><TreeArrow /></Toggle><Chip><ChipIcon><EyeGlyph off /></ChipIcon><ChipIcon $ml={9}><FolderGlyph /></ChipIcon><ChipText>Origin</ChipText></Chip></TreeRow>
        <TreeRow $indent={36}><Toggle $gap={8}><TreeArrow /></Toggle><Chip><ChipIcon><EyeGlyph /></ChipIcon><ChipIcon $ml={9}><FolderGlyph /></ChipIcon><ChipText>Bodies</ChipText><Squiggle /></Chip></TreeRow>
        <TreeRow $indent={36}><Toggle $gap={8}><TreeArrow /></Toggle><Chip><ChipIcon><EyeGlyph /></ChipIcon><ChipIcon $ml={9}><FolderGlyph /></ChipIcon><ChipText>Sketches</ChipText></Chip></TreeRow>
      </BrowserPanel>

      <Dialog>
        <DialogHeader>
          <HeaderGrip />
          <Dot><IconSvg width="5" height="5" viewBox="0 0 5 5"><path d="M0 2.500h5" stroke="#fff" strokeWidth="1.400" /></IconSvg></Dot>
          <DialogTitle>FILLET</DialogTitle>
          <DialogFast><IconSvg width="10" height="8" viewBox="0 0 10 8"><path d="M0 0l5 4-5 4zM5 0l5 4-5 4z" fill="#333" /></IconSvg></DialogFast>
        </DialogHeader>
        <FormRow $mt={1}>
          <FormLabel>Type</FormLabel>
          <Select><FilletGlyph /><SelectText>Fillet</SelectText><SelectCaret><Caret /></SelectCaret></Select>
        </FormRow>
        <EdgeTable>
          <EdgeRow>
            <EdgeName>2 Edges</EdgeName>
            <FilletGlyph />
            <EdgeInput>5 mm</EdgeInput>
            <EdgeTangent><TangentGlyph /></EdgeTangent>
            <EdgeTangentText>Tangent (G1)</EdgeTangentText>
          </EdgeRow>
          <EdgeActions>
            <IconSvg width="12" height="12" viewBox="0 0 12 12"><path d="M6 1v10M1 6h10" stroke="#555" strokeWidth="2" /></IconSvg>
            <IconSvg width="12" height="12" viewBox="0 0 12 12"><path d="M2 2l8 8M10 2l-8 8" stroke="#555" strokeWidth="2" /></IconSvg>
          </EdgeActions>
        </EdgeTable>
        <FormRow $mt={4}>
          <FormLabel>Radius Type</FormLabel>
          <Select><FilletGlyph /><SelectText>Constant</SelectText><SelectCaret><Caret /></SelectCaret></Select>
        </FormRow>
        <FormRow $mt={2}>
          <FormLabel>Edges/Faces/Features</FormLabel>
          <SelectButton><Cursor color="#e8e8e8" stroke="#333" />Select</SelectButton>
        </FormRow>
        <FormRow $mt={1}>
          <FormLabel $small>Tangent Chain</FormLabel>
          <Check><IconSvg width="10" height="10" viewBox="0 0 10 10"><path d="M1.500 5.500l2.500 3 4.500-7" fill="none" stroke="#222" strokeWidth="1.300" /></IconSvg></Check>
        </FormRow>
        <FormRow $mt={2}>
          <FormLabel>Tangency Weight</FormLabel>
          <TextField>1.00</TextField>
        </FormRow>
        <DialogRule />
        <FormRow $mt={3}>
          <FormLabel>Corner Type</FormLabel>
          <Select><CornerGlyph /><SelectText>Rolling Ball</SelectText><SelectCaret><Caret /></SelectCaret></Select>
        </FormRow>
        <DialogFooter>
          <FooterDot>i</FooterDot>
          <FooterButton>OK</FooterButton>
          <FooterButton>Cancel</FooterButton>
        </DialogFooter>
      </Dialog>

      <ValueBox>
        <ValueGrip />
        <ValueField>5</ValueField>
        <ValueDots><ValueDot /><ValueDot /><ValueDot /></ValueDots>
      </ValueBox>

      <CommentsPanel>
        <BarTitle>COMMENTS</BarTitle>
        <BarEnd><Dot><IconSvg width="5" height="5" viewBox="0 0 5 5"><path d="M0 2.500h5M2.500 0v5" stroke="#fff" strokeWidth="1.400" /></IconSvg></Dot><Grip /></BarEnd>
      </CommentsPanel>

      <NavBar>
        <NavItem $ml={3}>
          <IconSvg width="17" height="17" viewBox="0 0 17 17"><ellipse cx="8.500" cy="8.500" rx="8" ry="5" fill="none" stroke="#777" /><ellipse cx="8.500" cy="8.500" rx="4" ry="7.500" fill="#f1f1f1" stroke="#777" strokeDasharray="2 1" /><path d="M8.500 5v7M5 8.500h7" stroke="#1a7fd0" strokeWidth="1.400" /></IconSvg>
        </NavItem>
        <NavItem $ml={4}><Caret /></NavItem>
        <NavItem $ml={6}>
          <IconSvg width="17" height="16" viewBox="0 0 17 16"><rect x=".5" y="5.500" width="16" height="10" fill="#e8e8e8" stroke="#444" /><rect x="3" y="8" width="11" height="5" fill="#bbb" stroke="#444" /><path d="M1 5l4-4 2 3 3-3 2 3 3-2" fill="none" stroke="#444" /></IconSvg>
        </NavItem>
        <NavItem $ml={9}>
          <IconSvg width="17" height="17" viewBox="0 0 17 17"><path d="M5 16c-2-2-4-5-4-7 0-1 2-1 3 1V3c0-1.500 2-1.500 2 0V1.500c0-1.500 2-1.500 2 0V3c0-1 2-1 2 .5V5c0-1 2-1 2 .5V11c0 2-1 4-2 5z" fill="#fff" stroke="#444" strokeWidth=".9" /></IconSvg>
        </NavItem>
        <NavItem $ml={10}>
          <IconSvg width="17" height="17" viewBox="0 0 17 17"><circle cx="6" cy="7" r="5" fill="#fff" stroke="#555" /><path d="M9.500 10.500l5 5" stroke="#333" strokeWidth="2.400" /><path d="M14 1v5M11.500 3.500h5M11.500 8h5" stroke="#555" /></IconSvg>
        </NavItem>
        <NavItem $ml={7}>
          <IconSvg width="17" height="17" viewBox="0 0 17 17"><rect x=".5" y=".5" width="15" height="15" fill="none" stroke="#666" strokeDasharray="2 2" /><circle cx="7.500" cy="7" r="5" fill="#fff" stroke="#555" /><path d="M11 10.500l5 5" stroke="#333" strokeWidth="2.400" /></IconSvg>
        </NavItem>
        <NavItem $ml={4}><Caret /></NavItem>
        <NavItem $ml={6}>
          <IconSvg width="16" height="17" viewBox="0 0 16 17"><rect x=".5" y=".5" width="15" height="12" fill="#a8c4e8" stroke="#333" /><rect x="2" y="2" width="12" height="9" fill="#7fa8dc" /><path d="M8 13v2M4 16h8" stroke="#444" strokeWidth="1.200" /></IconSvg>
        </NavItem>
        <NavItem $ml={2}><Caret /></NavItem>
        <NavItem $ml={7}>
          <IconSvg width="16" height="16" viewBox="0 0 16 16"><rect width="16" height="16" fill="#8a8a8a" /><path d="M3.500 0v16M6.500 0v16M9.500 0v16M12.500 0v16M0 3.500h16M0 6.500h16M0 9.500h16M0 12.500h16" stroke="#d8d8d8" /></IconSvg>
        </NavItem>
        <NavItem $ml={2}><Caret /></NavItem>
        <NavItem $ml={7}>
          <IconSvg width="15" height="14" viewBox="0 0 15 14"><rect x=".5" y=".5" width="14" height="13" fill="#fff" stroke="#2c4e80" /><path d="M2 2h5v4H2zM8 2h5v4H8zM2 8h5v4H2zM8 8h5v4H8z" fill="#8fb2de" /></IconSvg>
        </NavItem>
        <NavItem $ml={3}><Caret /></NavItem>
      </NavBar>
      <SelectionCount>2 Edges</SelectionCount>
    </Canvas>

    <Timeline>
      <PlayButton $ml={0}><IconSvg width="13" height="15" viewBox="0 0 13 15"><path d="M1 0v15" stroke="#444" strokeWidth="2" /><path d="M13 0v15L2 7.500z" fill="#444" /></IconSvg></PlayButton>
      <PlayButton $ml={11}><IconSvg width="13" height="15" viewBox="0 0 13 15"><path d="M9 0v15L0 7.500z" fill="#444" /><rect x="10" y="5" width="3" height="6" fill="#444" /></IconSvg></PlayButton>
      <PlayButton $ml={13}><IconSvg width="12" height="16" viewBox="0 0 12 16"><path d="M0 0l12 8-12 8z" fill="#444" /></IconSvg></PlayButton>
      <PlayButton $ml={12}><IconSvg width="13" height="15" viewBox="0 0 13 15"><rect y="5" width="3" height="6" fill="#444" /><path d="M4 0v15l9-7.500z" fill="#444" /></IconSvg></PlayButton>
      <PlayButton $ml={12}><IconSvg width="13" height="15" viewBox="0 0 13 15"><path d="M12 0v15" stroke="#444" strokeWidth="2" /><path d="M0 0v15l11-7.500z" fill="#444" /></IconSvg></PlayButton>
      <Track>
        <TrackRow>
          <FeatureTicks width="16" height="6" viewBox="0 0 16 6"><path d="M1 5l3-4M6.500 5l3-4M12 5l3-4" stroke="#555" strokeWidth="2" /></FeatureTicks>
          <TrackItem><TimelineSketch /></TrackItem>
          <TrackItem><TimelineExtrude /></TrackItem>
          <TrackItem><TimelineSketch /></TrackItem>
          <TrackItem><TimelineExtrude /></TrackItem>
          <TrackItem><TimelineSketch /></TrackItem>
          <TrackItem><TimelineExtrude /></TrackItem>
          <TrackBracket />
          <TrackMarker width="12" height="32" viewBox="0 0 12 32"><path d="M0 0h12v3L7.500 8v24h-3V8L0 3z" fill="#555" /></TrackMarker>
        </TrackRow>
      </Track>
      <Gear><GearGlyph size={16} color="#7a7a7a" /></Gear>
    </Timeline>
  </Page>
);

export default App;
